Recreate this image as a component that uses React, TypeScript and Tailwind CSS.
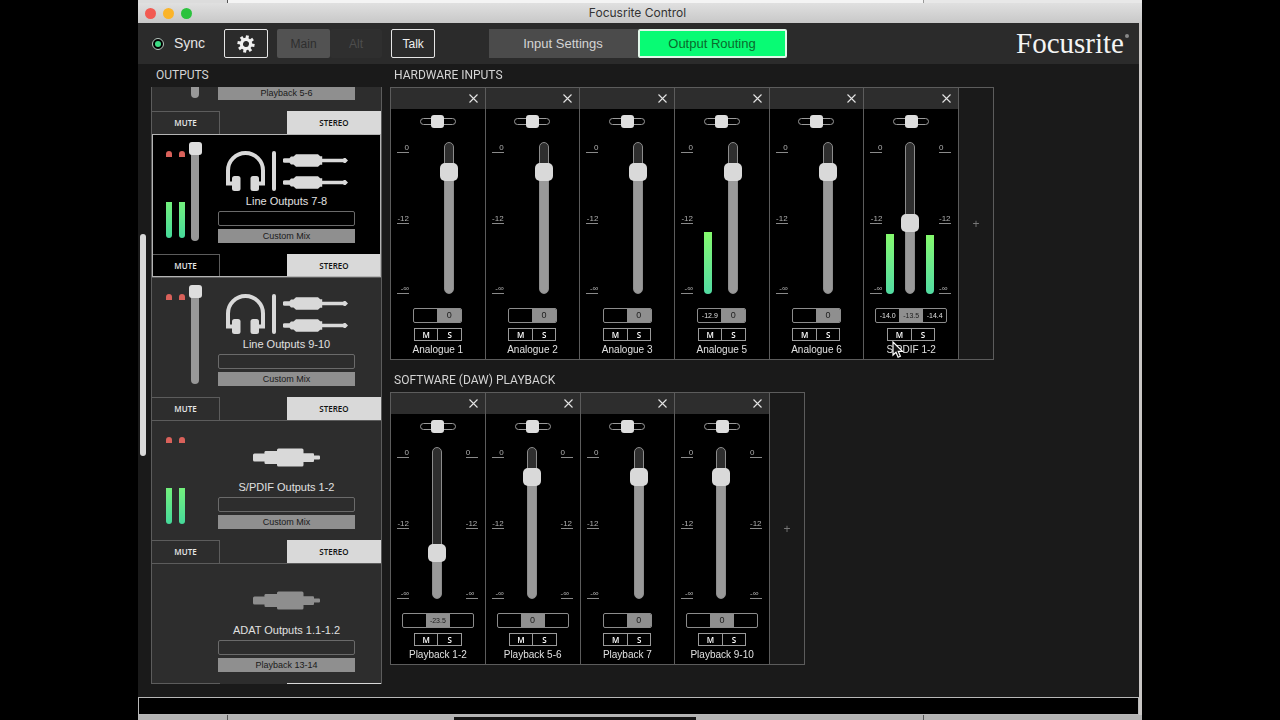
import { useEffect, useRef, useState } from 'react';
import clsx from 'clsx';

type Channel = {
  name: string;
  gain: number;
  gainText: string;
  stereo?: boolean;
  levels?: { height: number; text: string }[];
};

type Output = {
  name: string;
  source: string;
  icon: 'line' | 'digital';
  selected?: boolean;
  dimmed?: boolean;
  fader?: boolean;
  peaks?: boolean;
  metering?: boolean;
};

const hardwareInputs: Channel[] = [
  { name: 'Analogue 1', gain: 85, gainText: '0' },
  { name: 'Analogue 2', gain: 85, gainText: '0' },
  { name: 'Analogue 3', gain: 85, gainText: '0' },
  { name: 'Analogue 5', gain: 85, gainText: '0', levels: [{ height: 62, text: '-12.9' }] },
  { name: 'Analogue 6', gain: 85, gainText: '0' },
  {
    name: 'S/PDIF 1-2',
    gain: 46,
    gainText: '-13.5',
    stereo: true,
    levels: [
      { height: 60, text: '-14.0' },
      { height: 59, text: '-14.4' },
    ],
  },
];

const playbackInputs: Channel[] = [
  { name: 'Playback 1-2', gain: 27, gainText: '-23.5', stereo: true },
  { name: 'Playback 5-6', gain: 85, gainText: '0', stereo: true },
  { name: 'Playback 7', gain: 85, gainText: '0' },
  { name: 'Playback 9-10', gain: 85, gainText: '0', stereo: true },
];

const outputs: Output[] = [
  { name: 'Line Outputs 5-6', source: 'Playback 5-6', icon: 'line', fader: true },
  { name: 'Line Outputs 7-8', source: 'Custom Mix', icon: 'line', fader: true, peaks: true, metering: true, selected: true },
  { name: 'Line Outputs 9-10', source: 'Custom Mix', icon: 'line', fader: true, peaks: true },
  { name: 'S/PDIF Outputs 1-2', source: 'Custom Mix', icon: 'digital', peaks: true, metering: true },
  { name: 'ADAT Outputs 1.1-1.2', source: 'Playback 13-14', icon: 'digital', dimmed: true },
];

function GearIcon() {
  return (
    <svg width="18" height="18" viewBox="-9 -9 18 18" fill="none">
      <g transform="rotate(10)">
        <circle r="4.6" stroke="#f0f0f0" strokeWidth="3.2" />
        {[0, 45, 90, 135, 180, 225, 270, 315].map((a) => (
          <rect key={a} x="-1.5" y="-8.6" width="3" height="3.4" fill="#f0f0f0" transform={`rotate(${a})`} />
        ))}
      </g>
    </svg>
  );
}

function HeadphonesIcon() {
  return (
    <svg width="39" height="40" viewBox="0 0 39 40">
      <path d="M8 32.5H2V19.5a17.5 17.5 0 0 1 35 0v13h-6" fill="none" stroke="#d9d9d9" strokeWidth="4" />
      <rect x="6" y="25" width="8.5" height="15" rx="2.5" fill="#d9d9d9" />
      <rect x="24.5" y="25" width="8.5" height="15" rx="2.5" fill="#d9d9d9" />
    </svg>
  );
}

function JackIcon() {
  return (
    <svg width="65" height="13" viewBox="0 0 65 13" fill="#d9d9d9">
      <path d="M1.5 4.3H6.5L8 2.4h2.5L13 .3h22l2.2 1.9h2V4.8H60l1-.9h1.5l2.5 2.6-2.5 2.6H61l-1-.9H39.2v2.6h-2L35 12.7H13l-2.5-2.1H8L6.5 8.7h-5a2.2 2.2 0 0 1 0-4.4z" />
    </svg>
  );
}

function PhonoIcon({ color }: { color: string }) {
  return (
    <svg width="67" height="19" viewBox="0 0 67 19" fill={color}>
      <rect x="0" y="5.5" width="14" height="8" rx="1.5" />
      <rect x="11.5" y="3" width="16" height="13" rx="1.2" />
      <rect x="24" y="0.5" width="26.5" height="18" rx="1.5" />
      <rect x="49" y="5.2" width="12" height="8.8" rx="1" />
      <rect x="59" y="7.6" width="8" height="4" rx="1" />
    </svg>
  );
}

function CloseIcon() {
  return (
    <svg width="9" height="9" viewBox="0 0 9 9" stroke="#e4e4e4" strokeWidth="1.1">
      <path d="M.5.5l8 8M8.5.5l-8 8" />
    </svg>
  );
}

function Scale({ side }: { side: 'left' | 'right' }) {
  return (
    <div
      className={clsx(
        'flex w-3 flex-col justify-between pt-px text-[8px] leading-[9px] text-[#b0b0b0]',
        side === 'left' ? 'text-right' : 'ml-auto mr-[7px] text-left'
      )}
    >
      {['0', '-12', '-∞'].map((mark) => (
        <div key={mark} className="border-b border-[#8a8a8a]">
          {mark}
        </div>
      ))}
    </div>
  );
}

function Meter({ height }: { height: number }) {
  return (
    <div className="flex w-2 items-end">
      <div className="w-full rounded-b-full bg-linear-to-b from-[#84fa6c] to-[#52dba2]" style={{ height }} />
    </div>
  );
}

function ChannelStrip({ channel, children }: { channel: Channel; children?: React.ReactNode }) {
  const [gain, setGain] = useState(channel.gain);
  const levels = channel.levels ?? [];

  return (
    <div className="relative flex flex-col items-center border-r border-[#5c5c5c] bg-black">
      <div className="flex h-[21px] w-full items-center justify-end bg-[#2d2d2d] pr-[7px]">
        <button aria-label={`Remove ${channel.name}`}>
          <CloseIcon />
        </button>
      </div>

      <input
        type="range"
        aria-label={`${channel.name} pan`}
        defaultValue={50}
        className="mt-[9px] h-[7px] w-9 appearance-none rounded-full border border-[#9a9a9a] bg-black [&::-webkit-slider-thumb]:h-[13px] [&::-webkit-slider-thumb]:w-[13px] [&::-webkit-slider-thumb]:appearance-none [&::-webkit-slider-thumb]:rounded-[3px] [&::-webkit-slider-thumb]:bg-[#dedede]"
      />

      <div className="mt-[17px] flex h-[152px] w-full pl-[6px]">
        <Scale side="left" />
        <div className={clsx('flex', channel.stereo ? 'ml-1 gap-[11px]' : 'ml-[11px] gap-4')}>
          <Meter height={levels[0]?.height ?? 0} />
          <input
            type="range"
            aria-label={`${channel.name} level`}
            value={gain}
            onChange={(e) => setGain(Number(e.target.value))}
            className="h-[152px] w-[10px] appearance-none rounded-full border border-[#8c8c8c] [direction:rtl] [writing-mode:vertical-lr] [&::-webkit-slider-thumb]:h-[18px] [&::-webkit-slider-thumb]:w-[18px] [&::-webkit-slider-thumb]:appearance-none [&::-webkit-slider-thumb]:rounded-[5px] [&::-webkit-slider-thumb]:bg-[#d9d9d9]"
            style={{ background: `linear-gradient(to top, #999 ${gain}%, #2e2e2e ${gain}%) border-box` }}
          />
          {channel.stereo && <Meter height={levels[1]?.height ?? 0} />}
        </div>
        {channel.stereo && <Scale side="right" />}
      </div>

      <div className="mt-[14px] flex h-[15px] overflow-hidden rounded-[2px] border border-[#8c8c8c] text-center text-[7px] leading-[13px] text-[#e0e0e0]">
        <span className="w-[23px]">{levels[0]?.text}</span>
        <input
          aria-label={`${channel.name} gain`}
          defaultValue={channel.gainText}
          className={clsx(
            'w-6 bg-[#8f8f8f] pb-px text-center text-[#1c1c1c] outline-none',
            channel.gainText.length > 1 ? 'text-[7px]' : 'text-[9px]'
          )}
        />
        {channel.stereo && <span className="w-[23px]">{levels[1]?.text}</span>}
      </div>

      <div className="mt-[5px] flex h-[13px] w-12 divide-x divide-[#9a9a9a] border border-[#9a9a9a] font-['Open_Sans',sans-serif] text-[8px] leading-[11px] font-semibold text-white">
        <button className="flex-1">M</button>
        <button className="flex-1">S</button>
      </div>
      <div className="mt-px text-[10px] leading-4 whitespace-nowrap text-[#e0e0e0]">{channel.name}</div>
      {children}
    </div>
  );
}

function Pointer() {
  return (
    <svg className="absolute bottom-0 left-7" width="12" height="18" viewBox="0 0 12 18">
      <path d="M1 1v13l3-2.8 2.1 5 2.3-1-2.1-4.8h4.2z" fill="#111" stroke="#fff" strokeWidth="1.2" />
    </svg>
  );
}

function SectionTitle({ children, className }: { children: React.ReactNode; className: string }) {
  return (
    <h2 className={clsx('font-[Roboto,sans-serif] text-[12px] leading-[23px] text-[#d4d4d4]', className)}>
      {children}
    </h2>
  );
}

function Mixer({ title, channels, className }: { title: string; channels: Channel[]; className: string }) {
  return (
    <section>
      <SectionTitle className="pl-1">{title}</SectionTitle>
      <div className="flex h-[273px] w-fit border border-[#5c5c5c]">
        <div className={clsx('grid auto-cols-fr grid-flow-col', className)}>
          {channels.map((channel) => (
            <ChannelStrip key={channel.name} channel={channel}>
              {channel.name === 'S/PDIF 1-2' && <Pointer />}
            </ChannelStrip>
          ))}
        </div>
        <button className="w-[34px] text-[12px] text-[#777]" aria-label={`Add to ${title}`}>
          +
        </button>
      </div>
    </section>
  );
}

function OutputCard({ output }: { output: Output }) {
  return (
    <div
      className={clsx(
        'h-[143px] border-t border-[#5c5c5c]',
        output.selected ? 'bg-black outline outline-1 -outline-offset-1 outline-[#b4b4b4]' : 'bg-[#2d2d2d]'
      )}
    >
      <div className="flex h-[119px]">
        <div className="flex w-[66px] shrink-0 pl-[14px]">
          <div className="mt-4 flex h-[87px] gap-[7px]">
            {[0, 1].map((n) => (
              <div key={n} className="flex w-[6px] flex-col justify-between">
                {output.peaks && <div className="h-[6px] rounded-t-[3px] bg-[#d9615a]" />}
                {output.metering && (
                  <div className="h-9 rounded-b-full bg-linear-to-b from-[#72f07c] to-[#45d99a]" />
                )}
              </div>
            ))}
          </div>
          {output.fader && (
            <input
              type="range"
              aria-label={`${output.name} level`}
              defaultValue={100}
              className="mt-[7px] ml-[6px] h-[99px] w-2 appearance-none rounded-full bg-[#989898] [direction:rtl] [writing-mode:vertical-lr] [&::-webkit-slider-thumb]:h-[13px] [&::-webkit-slider-thumb]:w-[13px] [&::-webkit-slider-thumb]:appearance-none [&::-webkit-slider-thumb]:rounded-[3px] [&::-webkit-slider-thumb]:bg-[#dedede]"
            />
          )}
        </div>
        <div className="flex w-[137px] flex-col pt-4">
          <div className="flex h-10 items-center justify-center gap-[7px]">
            {output.icon === 'line' ? (
              <>
                <HeadphonesIcon />
                <div className="h-10 w-1 rounded-full bg-[#d9d9d9]" />
                <div className="flex flex-col gap-[9px]">
                  <JackIcon />
                  <JackIcon />
                </div>
              </>
            ) : (
              <PhonoIcon color={output.dimmed ? '#8e8e8e' : '#d9d9d9'} />
            )}
          </div>
          <div className="text-center text-[11px] leading-5 whitespace-nowrap text-[#e0e0e0]">{output.name}</div>
          <input
            type="text"
            aria-label={`${output.name} nickname`}
            className="h-[15px] w-full rounded-[2px] border border-[#6a6a6a] px-1 text-[9px] text-[#e0e0e0] outline-none"
          />
          <button className="mt-[3px] h-[14px] bg-[#8f8f8f] text-[9px] leading-[12px] text-[#1a1a1a]">
            {output.source}
          </button>
        </div>
      </div>
      <div className="flex h-[23px] justify-between font-['Open_Sans',sans-serif] text-[8px] font-semibold">
        <button className="w-[68px] border-t border-r border-[#5c5c5c] text-[#e8e8e8]">MUTE</button>
        <button className="w-[94px] bg-[#d9d9d9] text-[#111]">STEREO</button>
      </div>
    </div>
  );
}

function Toolbar() {
  return (
    <header className="grid h-[41px] shrink-0 grid-cols-[1fr_auto_1fr] items-center bg-[#2b2b2b] pr-[2px] text-[12px]">
      <div className="flex items-center pl-[14px]">
        <div className="flex h-3 w-3 items-center justify-center rounded-full border border-[#b8c8c0] bg-black">
          <div className="h-[6px] w-[6px] rounded-full bg-[#3ddc84]" />
        </div>
        <span className="ml-[10px] text-[14px] text-[#e6e6e6]">Sync</span>
        <button
          aria-label="Settings"
          className="ml-[19px] flex h-[29px] w-11 items-center justify-center rounded-[2px] border border-[#e6e6e6]"
        >
          <GearIcon />
        </button>
        <button className="ml-[9px] h-[29px] w-[53px] rounded-[2px] bg-[#525252] text-[#2e2e2e]">Main</button>
        <button className="h-[29px] w-[52px] rounded-[2px] bg-[#2f2f2f] text-[#4d4d4d]">Alt</button>
        <button className="ml-[9px] h-[29px] w-11 rounded-[2px] border border-[#e6e6e6] text-[#f0f0f0]">Talk</button>
      </div>
      <nav className="flex text-[13px]">
        <button className="h-[29px] w-[149px] bg-[#4b4b4b] text-[#d4d4d4]">Input Settings</button>
        <button className="h-[29px] w-[149px] rounded-[2px] border-2 border-[#e2f7ea] bg-[#08fb74] text-[#0a6a2c]">
          Output Routing
        </button>
      </nav>
      <div className="flex items-center justify-end pr-2 font-['Liberation_Serif',serif] text-[29px] leading-none text-[#f4f4f4]">
        Focusrite
        <span className="mb-4 ml-px h-1 w-1 rounded-full bg-[#8a8a8a]" />
      </div>
    </header>
  );
}

function OutputList() {
  const listRef = useRef<HTMLDivElement>(null);

  // open with the selected output near the top
  useEffect(() => {
    if (listRef.current) listRef.current.scrollTop = 96;
  }, []);

  return (
    <aside className="flex min-h-0 w-[244px] shrink-0 flex-col">
      <SectionTitle className="pl-[18px]">OUTPUTS</SectionTitle>
      <div className="flex min-h-0 flex-1">
        <div className="w-[13px] shrink-0 pt-[147px] pl-[2px]">
          <div className="h-[222px] w-[6px] rounded-full bg-[#d9d9d9]" />
        </div>
        <div
          ref={listRef}
          className="min-w-0 flex-1 overflow-y-auto border-x border-[#5c5c5c] [scrollbar-width:none]"
        >
          {outputs.map((output) => (
            <OutputCard key={output.name} output={output} />
          ))}
        </div>
      </div>
    </aside>
  );
}

export default function App() {
  return (
    <div className="flex h-screen flex-col bg-black px-[138px] font-['Liberation_Sans',Arial,sans-serif]">
      <div className="flex h-[3px] shrink-0">
        <div className="w-[90px] border-r border-[#555] bg-[#dcdcdc]" />
        <div className="flex-1 bg-[#f4f4f4]" />
        <div className="w-[219px] border-l border-[#999] bg-[#e8e8e8]" />
      </div>
      <div className="grid h-5 shrink-0 grid-cols-[1fr_auto_1fr] items-center bg-linear-to-b from-[#e0e0e0] to-[#c8c8c8] pr-[5px]">
        <div className="flex gap-[7px] pl-[7px]">
          <button aria-label="Close" className="h-[11px] w-[11px] rounded-full bg-[#f25a52]" />
          <button aria-label="Minimise" className="h-[11px] w-[11px] rounded-full bg-[#fbb429]" />
          <button aria-label="Zoom" className="h-[11px] w-[11px] rounded-full bg-[#2cc23e]" />
        </div>
        <h1 className="font-[Inter,sans-serif] text-[12px] leading-5 text-[#333]">Focusrite Control</h1>
      </div>

      <div className="flex min-h-0 flex-1 flex-col border-r-[3px] border-[#c9c6c4] bg-[#1a1a1a]">
        <Toolbar />
        <main className="flex min-h-0 flex-1 gap-2 pb-[13px]">
          <OutputList />
          <div className="flex min-w-0 flex-1 flex-col gap-[9px]">
            <Mixer title="HARDWARE INPUTS" channels={hardwareInputs} className="w-[568px]" />
            <Mixer title="SOFTWARE (DAW) PLAYBACK" channels={playbackInputs} className="w-[379px]" />
          </div>
        </main>
        <footer className="h-[18px] shrink-0 border border-[#b8b8b8] bg-black" />
      </div>

      <div className="flex h-[5px] shrink-0 bg-[#b4b4b4]">
        <div className="w-[90px] border-r border-[#555]" />
        <div className="w-[226px]" />
        <div className="mt-[2px] w-[242px] bg-[#151515]" />
        <div className="flex-1" />
        <div className="w-[219px] border-l border-[#555]" />
      </div>
    </div>
  );
}
